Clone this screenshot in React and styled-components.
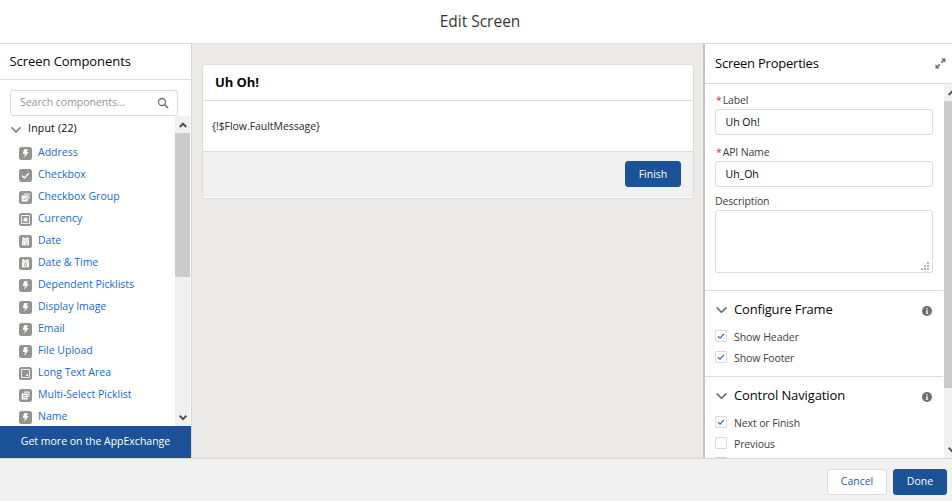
import React from "react";
import styled, { createGlobalStyle } from "styled-components";

const Global = createGlobalStyle`
  * { box-sizing: border-box; }
  body {
    margin: 0;
    overflow: hidden;
    font-family: "Open Sans", "Noto Sans", sans-serif;
    font-size: 10.5px;
    color: #080707;
  }
`;

const Modal = styled.div`
  width: 952px;
  height: 501px;
  display: grid;
  grid-template-rows: 44px 414px 43px;
  overflow: hidden;
  background: #fff;
`;

const ModalHeader = styled.header`
  display: flex;
  justify-content: center;
  border-bottom: 1px solid #dddbda;
  padding: 10px 0 0 8px;
  font-size: 15.5px;
  line-height: 22px;
  font-weight: 400;
  color: #3a3836;
`;

const ModalBody = styled.main`
  display: grid;
  grid-template-columns: 192px 511px 249px;
  min-height: 0;
`;

const ModalFooter = styled.footer`
  display: flex;
  justify-content: flex-end;
  gap: 6px;
  padding: 10px 5px 0 0;
  background: #f1f1f1;
  border-top: 1px solid #dad8d7;
`;

const Button = styled.button`
  width: ${(p) => p.$width}px;
  height: 26px;
  padding: 0 0 ${(p) => p.$lift || 1}px;
  border: 1px solid ${(p) => (p.$brand ? "#1b5297" : "#dddbda")};
  border-radius: 3px;
  background: ${(p) => (p.$brand ? "#1b5297" : "#fff")};
  color: ${(p) => (p.$brand ? "#fff" : "#2a5ca4")};
  font: inherit;
  font-size: 10.5px;
`;

const Palette = styled.aside`
  display: flex;
  flex-direction: column;
  min-height: 0;
  border-right: 1px solid #dad8d7;
`;

const PanelTitle = styled.h2`
  display: flex;
  justify-content: space-between;
  align-items: center;
  flex: none;
  height: ${(p) => p.$height}px;
  margin: 0;
  padding: 0 6px 0 ${(p) => p.$left}px;
  border-bottom: 1px solid #dddbda;
  font-size: 13px;
  font-weight: 400;
  letter-spacing: ${(p) => p.$spacing || 0}px;
  span { margin-top: -2px; }
`;

const SearchBox = styled.div`
  display: flex;
  flex: none;
  align-items: center;
  justify-content: space-between;
  width: 168px;
  height: 26px;
  margin: 10px 0 0 10px;
  padding: 0 8px 0 9px;
  border: 1px solid #dddbda;
  border-radius: 3px;
  color: #969492;
  letter-spacing: -0.02px;
  span { margin-top: -2px; }
`;

const TreeArea = styled.div`
  display: flex;
  height: 310px;
  overflow: hidden;
  padding-right: 1px;
`;

const Tree = styled.div`
  flex: 1;
  overflow: hidden;
`;

const TreeHeading = styled.div`
  display: flex;
  align-items: center;
  gap: 7px;
  height: 26px;
  padding: 0 0 1px 11px;
  letter-spacing: 0.2px;
  svg { margin-top: 2px; }
  span { margin-top: -1px; }
`;

const TreeItem = styled.div`
  display: flex;
  align-items: center;
  gap: 6px;
  height: 22px;
  padding-left: 19px;
  color: #186bc9;
  svg { margin-top: 1px; }
  span { margin-top: -2px; }
`;

const ScrollTrack = styled.div`
  display: flex;
  flex-direction: column;
  flex: none;
  width: 15px;
  background: #f1f1f1;
  overflow: hidden;
`;

const ScrollArrow = styled.div`
  flex: none;
  height: 17px;
  padding-top: 6px;
  padding-left: ${(p) => p.$left}px;
  line-height: 0;
`;

const ScrollThumb = styled.div`
  height: ${(p) => p.$height}px;
  margin-bottom: auto;
  background: #cbcbcb;
`;

const ExchangeLink = styled.div`
  height: 32px;
  display: flex;
  align-items: center;
  justify-content: center;
  padding-bottom: 2px;
  background: #1b5297;
  color: #fff;
`;

const Canvas = styled.section`
  padding: 20px 9px 0 10px;
  background: #ebeae9;
`;

const Card = styled.article`
  width: 492px;
  height: 135px;
  border: 1px solid #dddbda;
  border-radius: 3px;
  background: #fff;
  overflow: hidden;
`;

const CardTitle = styled.h3`
  height: 36px;
  margin: 0;
  padding: 6px 0 0 12px;
  border-bottom: 1px solid #dddbda;
  font-size: 13px;
  line-height: 22px;
  font-weight: 700;
  letter-spacing: -0.1px;
`;

const CardBody = styled.div`
  height: 50px;
  padding: 17px 0 0 9px;
  line-height: 16px;
  color: #2b2826;
  letter-spacing: -0.04px;
`;

const CardFooter = styled.div`
  display: flex;
  justify-content: flex-end;
  height: 46px;
  padding: 9px 12px 0 0;
  border-top: 1px solid #dddbda;
  background: #f1f1f1;
`;

const Properties = styled.aside`
  display: flex;
  flex-direction: column;
  min-height: 0;
  overflow: hidden;
  border-left: 2px solid #c6c4c2;
`;

const PropertiesScroll = styled.div`
  display: flex;
  height: 374px;
  overflow: hidden;
`;

const PropertiesContent = styled.div`
  width: 238px;
  margin-right: 1px;
  flex: none;
  overflow: hidden;
`;

const Fields = styled.div`
  height: 207px;
  padding: 8px 0 0 10px;
  border-bottom: 1px solid #dddbda;
`;

const Label = styled.div`
  height: 17px;
  margin-top: ${(p) => p.$top || 0}px;
  line-height: ${(p) => p.$line || 17}px;
  color: #3e3e3c;
  letter-spacing: -0.15px;
`;

const Required = styled.span`
  padding: 0 1px;
  color: #c23934;
`;

const Input = styled.div`
  width: 218px;
  height: 26px;
  padding: 0 0 0 9.5px;
  border: 1px solid #dddbda;
  border-radius: 3px;
  line-height: 24px;
`;

const TextArea = styled.div`
  display: flex;
  align-items: flex-end;
  justify-content: flex-end;
  width: 218px;
  height: 63px;
  padding: 0 3px 2px 0;
  border: 1px solid #dddbda;
  border-radius: 3px;
`;

const Section = styled.section`
  height: 86px;
  padding-left: 10px;
  border-bottom: 1px solid #dddbda;
`;

const SectionHeading = styled.div`
  display: flex;
  align-items: center;
  height: 38px;
  padding: 0 11px 0 1px;
  font-size: 13px;
  letter-spacing: ${(p) => p.$spacing || 0}px;
  span { flex: 1; margin: -2px 0 0 7px; }
  svg:last-child { margin-top: 2px; }
`;

const CheckRow = styled.div`
  display: flex;
  align-items: flex-start;
  height: 21px;
  gap: 7px;
  line-height: 17px;
  color: #3e3e3c;
  letter-spacing: ${(p) => p.$spacing || 0}px;
`;

const Box = styled.div`
  display: flex;
  align-items: center;
  justify-content: center;
  width: 12px;
  height: 12px;
  margin-top: ${(p) => (p.$focus ? 0 : 1)}px;
  border: 1px solid ${(p) => (p.$focus ? "#b9d7f3" : "#dddbda")};
  background: #fff;
  border-radius: 1px;
`;

const Chevron = ({ size = 10 }) => (
  <svg width={size} height={size * 0.6} viewBox="0 0 10 6" fill="none">
    <path d="M1 .8 5 4.9 9 .8" stroke="#706e6b" strokeWidth="1.4" strokeLinecap="round" />
  </svg>
);

const Arrow = ({ down }) => (
  <svg width="8" height="6" viewBox="0 0 8 6" fill="none">
    <path d={down ? "M.7 .8 4 4.1 7.3 .8" : "M.7 5 4 1.7 7.3 5"} stroke="#505050" strokeWidth="2" />
  </svg>
);

const SearchIcon = () => (
  <svg width="12" height="12" viewBox="0 0 12 12" fill="none" stroke="#706e6b">
    <circle cx="5" cy="5" r="3.5" strokeWidth="1.3" />
    <path d="m7.7 7.7 3 3" strokeWidth="1.6" strokeLinecap="round" />
  </svg>
);

const ExpandIcon = () => (
  <svg width="11" height="11" viewBox="0 0 11 11" fill="#706e6b" stroke="#706e6b">
    <path d="M6.200.5h4.300v4.300zM.5 6.200v4.300h4.300z" stroke="none" />
    <path d="M6.300 4.700 9 2M4.700 6.300 2 9" strokeWidth="1.7" />
  </svg>
);

const InfoIcon = () => (
  <svg width="10" height="10" viewBox="0 0 10 10">
    <circle cx="5" cy="5" r="5" fill="#706e6b" />
    <path d="M4.300 2h1.400v1.200H4.300zM4 4.200h1.700v2.700h.5v.8H3.800v-.8h.5V5H4z" fill="#fff" />
  </svg>
);

const Check = () => (
  <svg width="8" height="8" viewBox="0 0 8 8" fill="none">
    <path d="M1 4.200 3 6.200 7 1.800" stroke="#2c62b0" strokeWidth="1.2" />
  </svg>
);

const Grip = () => (
  <svg width="8" height="8" viewBox="0 0 8 8" fill="#b5b5b5" shapeRendering="crispEdges">
    <path d="M6 0h2v2H6zM3 3h2v2H3zM6 3h2v2H6zM0 6h2v2H0zM3 6h2v2H3zM6 6h2v2H6z" />
  </svg>
);

const glyphs = {
  bolt: <path d="M5.100 2.300h3.700L7.700 5h2L5.300 10.700 6 7.100H3.800z" fill="#fff" />,
  check: <path d="m3.200 6.700 2.200 2.200 4.500-4.600" fill="none" stroke="#fff" strokeWidth="1.400" />,
  group: (
    <>
      <path d="M5 2.500h5.500V8H9.300V3.700H5z" fill="#fff" opacity=".8" />
      <path d="M2.700 4.500h6v6h-6z" fill="#fff" />
      <path d="m4 7.500 1.300 1.300 2.200-2.500" fill="none" stroke="#969492" />
    </>
  ),
  currency: (
    <>
      <path d="M2.500 2.500h8v8h-8z" fill="none" stroke="#fff" strokeWidth="1" opacity=".85" />
      <path d="M4.500 5.500h1v-1h2v1h1v3h-4z" fill="#fff" />
    </>
  ),
  date: (
    <>
      <path d="M3 3.200h1V2h1.200v1.200h2.600V2H9v1.200h1v1.500H3zM3 5.300h7v5H3z" fill="#fff" />
      <path d="M4.200 7h1M6 7h1M4.200 8.800h1M8 6.600v2.600H6.600" fill="none" stroke="#969492" strokeWidth=".6" />
    </>
  ),
  datetime: (
    <>
      <path d="M3 3.200h1V2h1.200v1.200h2.600V2H9v1.200h1v1.500H3zM3 5.300h7v5H3z" fill="#fff" />
      <circle cx="6.500" cy="7.800" r="1.300" fill="none" stroke="#969492" strokeWidth=".9" />
    </>
  ),
  area: (
    <>
      <path d="M2.500 2.500h8v8h-8z" fill="none" stroke="#fff" strokeWidth="1" opacity=".85" />
      <path d="M7 8.500h1.500V7" fill="none" stroke="#fff" strokeWidth="1.200" />
    </>
  ),
  multi: (
    <>
      <path d="M5 2.500h5.500V8H9.300V3.700H5z" fill="#fff" opacity=".8" />
      <path d="M2.700 4.500h6v6h-6z" fill="#fff" />
      <path d="M4 6.500h3.500M4 8.500h3.500" stroke="#969492" strokeWidth=".8" />
    </>
  ),
};

const ItemIcon = ({ kind }) => (
  <svg width="13" height="13" viewBox="0 0 13 13">
    <rect width="13" height="13" rx="2.500" fill="#969492" />
    {glyphs[kind]}
  </svg>
);

const items = [
  ["Address", "bolt"],
  ["Checkbox", "check"],
  ["Checkbox Group", "group"],
  ["Currency", "currency"],
  ["Date", "date"],
  ["Date & Time", "datetime"],
  ["Dependent Picklists", "bolt"],
  ["Display Image", "bolt"],
  ["Email", "bolt"],
  ["File Upload", "bolt"],
  ["Long Text Area", "area"],
  ["Multi-Select Picklist", "multi"],
  ["Name", "bolt"],
];

const CheckOption = ({ label, checked, focus, spacing }) => (
  <CheckRow $spacing={spacing}>
    <Box $focus={focus}>{checked && <Check />}</Box>
    {label && <span>{label}</span>}
  </CheckRow>
);

export default function App() {
  return (
    <Modal>
      <Global />
      <ModalHeader>Edit Screen</ModalHeader>
      <ModalBody>
        <Palette>
          <PanelTitle $height={36} $left={9.5} $spacing={-0.07}><span>Screen Components</span></PanelTitle>
          <SearchBox>
            <span>Search components...</span>
            <SearchIcon />
          </SearchBox>
          <TreeArea>
            <Tree>
              <TreeHeading><Chevron /><span>Input (22)</span></TreeHeading>
              {items.map(([name, kind]) => (
                <TreeItem key={name}><ItemIcon kind={kind} /><span>{name}</span></TreeItem>
              ))}
            </Tree>
            <ScrollTrack>
              <ScrollArrow $left={3.5}><Arrow /></ScrollArrow>
              <ScrollThumb $height={144} />
              <ScrollArrow $left={3.5}><Arrow down /></ScrollArrow>
            </ScrollTrack>
          </TreeArea>
          <ExchangeLink>Get more on the AppExchange</ExchangeLink>
        </Palette>
        <Canvas>
          <Card>
            <CardTitle>Uh Oh!</CardTitle>
            <CardBody>{"{!$Flow.FaultMessage}"}</CardBody>
            <CardFooter><Button $brand $width={56}>Finish</Button></CardFooter>
          </Card>
        </Canvas>
        <Properties>
          <PanelTitle $height={40} $left={10} $spacing={-0.23}><span>Screen Properties</span><ExpandIcon /></PanelTitle>
          <PropertiesScroll>
            <PropertiesContent>
              <Fields>
                <Label><Required>*</Required>Label</Label>
                <Input>Uh Oh!</Input>
                <Label $top={9}><Required>*</Required>API Name</Label>
                <Input>Uh_Oh</Input>
                <Label $top={6}>Description</Label>
                <TextArea><Grip /></TextArea>
              </Fields>
              <Section>
                <SectionHeading $spacing={-0.18}><Chevron size={11} /><span>Configure Frame</span><InfoIcon /></SectionHeading>
                <CheckOption label="Show Header" checked spacing={-0.05} />
                <CheckOption label="Show Footer" checked spacing={-0.1} />
              </Section>
              <Section>
                <SectionHeading $spacing={-0.12}><Chevron size={11} /><span>Control Navigation</span><InfoIcon /></SectionHeading>
                <CheckOption label="Next or Finish" checked spacing={-0.12} />
                <CheckOption label="Previous" spacing={-0.15} />
                <CheckOption focus />
              </Section>
            </PropertiesContent>
            <ScrollTrack>
              <ScrollArrow $left={4}><Arrow /></ScrollArrow>
              <ScrollThumb $height={287} />
              <ScrollArrow $left={4}><Arrow down /></ScrollArrow>
            </ScrollTrack>
          </PropertiesScroll>
        </Properties>
      </ModalBody>
      <ModalFooter>
        <Button $width={60} $lift={2}>Cancel</Button>
        <Button $brand $width={54} $lift={2}>Done</Button>
      </ModalFooter>
    </Modal>
  );
}
